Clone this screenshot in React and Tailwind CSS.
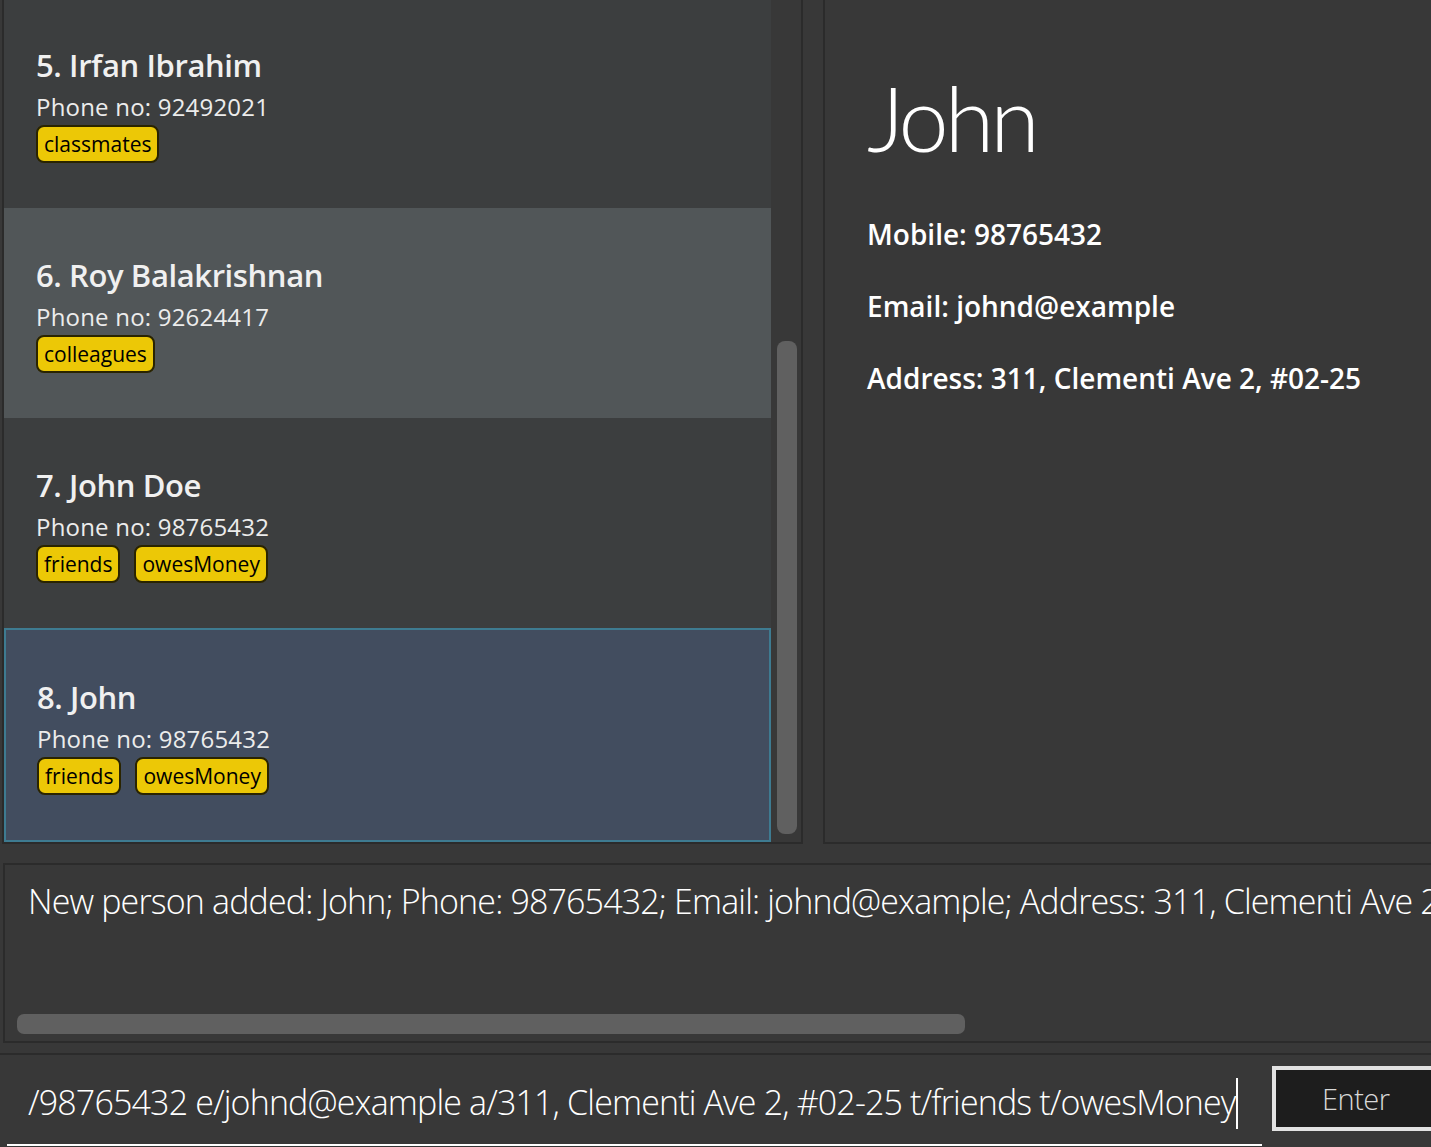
const FONT = "font-['Open_Sans','Noto_Sans',sans-serif]"

const PEOPLE = [
  { id: 5, name: 'Irfan Ibrahim', phone: '92492021', tags: ['classmates'] },
  { id: 6, name: 'Roy Balakrishnan', phone: '92624417', tags: ['colleagues'] },
  { id: 7, name: 'John Doe', phone: '98765432', tags: ['friends', 'owesMoney'] },
  { id: 8, name: 'John', phone: '98765432', tags: ['friends', 'owesMoney'] },
]

function Tag({ label }) {
  return (
    <span className="flex h-[38px] items-center rounded-[8px] border-2 border-[#2a2400] bg-[#ecc806] px-[6px] text-[21px] leading-none text-black">
      {label}
    </span>
  )
}

function PersonCard({ person, index, selected }) {
  const bg = selected
    ? 'h-[214px] border-2 border-[#3e7b91] bg-[#424d5f] pl-[31px] pt-[47px]'
    : index % 2 === 1
      ? 'h-[210px] bg-[#515658] pl-[32px] pt-[47px]'
      : 'h-[210px] bg-[#3c3e3f] pl-[32px] pt-[47px]'
  return (
    <div className={`flex flex-none flex-col ${bg}`}>
      <div className="text-[31px] font-semibold leading-[40px] tracking-[-0.4px] text-[#f0f0f0]">
        {person.id}. {person.name}
      </div>
      <div className="mt-[6px] text-[24px] leading-[32px] tracking-[0.2px] text-[#ececec]">Phone no: {person.phone}</div>
      <div className="mt-[2px] flex gap-[14px]">
        {person.tags.map((t) => <Tag key={t} label={t} />)}
      </div>
    </div>
  )
}

export default function App() {
  return (
    <div className={`flex h-[1147px] w-[1431px] flex-col overflow-hidden bg-[#383838] ${FONT}`}>
      {/* list + detail */}
      <div className="flex h-[844px] flex-none">
        <div className="ml-[2px] flex w-[801px] flex-none border-x-2 border-b-2 border-[#2b2b2b]">
          <div className="flex w-[767px] flex-none flex-col overflow-hidden">
            <div className="-mt-[2px] flex flex-col">
              {PEOPLE.map((p, i) => (
                <PersonCard key={p.id} person={p} index={i} selected={p.id === 8} />
              ))}
            </div>
          </div>
          <div className="flex-1 pl-[6px] pr-[4px] pt-[341px]">
            <div className="h-[493px] rounded-[8px] bg-[#606060]" />
          </div>
        </div>

        <div className="ml-[20px] flex flex-1 flex-col border-b-2 border-l-2 border-[#2b2b2b] pl-[42px] text-white">
          <div className="mt-[72px] font-['Lato',sans-serif] text-[90px] font-light leading-[90px] tracking-[-4px]">John</div>
          <div className="mt-[54px] flex flex-col gap-[36px] text-[28px] font-semibold leading-[36px]">
            <div>Mobile: 98765432</div>
            <div>Email: johnd@example</div>
            <div>Address: 311, Clementi Ave 2, #02-25</div>
          </div>
        </div>
      </div>

      {/* result display */}
      <div className="ml-[3px] mt-[19px] flex h-[180px] w-[1440px] flex-none flex-col overflow-hidden border-2 border-[#2b2b2b]">
        <div className="whitespace-nowrap pl-[23px] pt-[13px] text-[34px] font-light leading-[46px] tracking-[-0.85px] text-white">
          New person added: John; Phone: 98765432; Email: johnd@example; Address: 311, Clementi Ave 2, #02-25; Tags: [friends][owesMoney]
        </div>
        <div className="mb-[7px] ml-[12px] mt-auto h-[20px] w-[948px] rounded-[7px] bg-[#606060]" />
      </div>

      {/* command box */}
      <div className="mt-[10px] flex flex-1 border-t-2 border-[#2b2b2b]">
        <div className="ml-[7px] flex h-[91px] w-[1255px] flex-none overflow-hidden border-b-2 border-white pl-[21px] pt-[24px]">
          <span className="whitespace-nowrap text-[34px] font-light leading-[46px] tracking-[-0.85px] text-white">
            /98765432 e/johnd@example a/311, Clementi Ave 2, #02-25 t/friends t/owesMoney
          </span>
          <span className="-mt-[1px] h-[51px] w-[2px] flex-none bg-white" />
        </div>
        <div className="ml-[10px] mt-[11px] flex h-[65px] w-[168px] flex-none items-center border-4 border-[#e2e2e2] bg-[#1d1d1d] pl-[46px] text-[29px] font-light tracking-[-0.5px] text-[#d8d8d8]">
          Enter
        </div>
      </div>
    </div>
  )
}
